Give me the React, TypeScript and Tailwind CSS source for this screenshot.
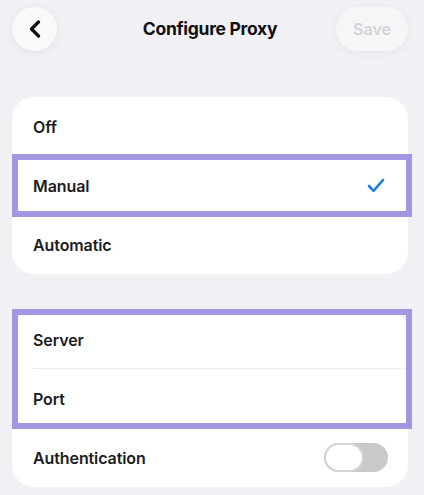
import { useState } from "react";

// Proxy settings screen: mode picker, server/port fields and an auth toggle
function Row({ label, children, divider }: { label: string; children?: React.ReactNode; divider?: boolean }) {
    return (
        <div className="relative flex h-[59px] items-center justify-between pl-[21px] pr-[20px]">
            <span className="text-[16px] font-semibold tracking-[-0.1px] text-[#1c1c1e]">{label}</span>
            {children}
            {divider && <div className="absolute bottom-0 left-[21px] right-0 h-px bg-[#ececf1]" />}
        </div>
    );
}

function Toggle({ on, onChange }: { on: boolean; onChange: (v: boolean) => void }) {
    return (
        <button
            onClick={() => onChange(!on)}
            className={`flex h-[29px] w-[64px] items-center rounded-full p-0 ${on ? "bg-[#34c759] justify-end" : "bg-[#c9c9cc] justify-start"}`}
        >
            <span className="h-[29px] w-[40px] rounded-full border-[2px] border-[#d4d4d6] bg-white" />
        </button>
    );
}

export default function App() {
    const [mode, setMode] = useState("Manual");
    const [auth, setAuth] = useState(false);

    return (
        <div className="min-h-[495px] bg-[#f0f0f5] pl-3 pr-4 pt-[7px] font-['Inter',sans-serif]">
            <div className="grid h-[44px] grid-cols-[1fr_auto_1fr] items-center">
                <button className="flex h-[44px] w-[45px] items-center justify-center rounded-full bg-[#f9f9fb] shadow-[0_2px_10px_rgba(0,0,0,0.06)]">
                    <svg width="14" height="18" viewBox="0 0 14 18" fill="none">
                        <path d="M10.5 2L3.5 9l7 7" stroke="#111" strokeWidth="3.2" strokeLinecap="round" strokeLinejoin="round" />
                    </svg>
                </button>
                <h1 className="text-[17.5px] font-bold tracking-[-0.3px] text-[#111]">Configure Proxy</h1>
                <button className="h-[44px] w-[72px] justify-self-end rounded-full bg-[#f6f6f9] text-[16px] font-semibold text-[#d2d2d7] shadow-[0_2px_10px_rgba(0,0,0,0.05)]">
                    Save
                </button>
            </div>

            <div className="mt-[46px] rounded-[22px] bg-white">
                <div onClick={() => setMode("Off")}>
                    <Row label="Off" />
                </div>
                <div className="relative" onClick={() => setMode("Manual")}>
                    <Row label="Manual">
                        {mode === "Manual" && (
                            <svg width="18" height="15" viewBox="0 0 18 15" fill="none" className="mr-[3px]">
                                <path d="M2 8l4.5 4.8L16 2" stroke="#1b7fe3" strokeWidth="2.6" strokeLinecap="round" strokeLinejoin="round" />
                            </svg>
                        )}
                    </Row>
                    <div className="pointer-events-none absolute -top-[2px] -bottom-[2px] left-0 -right-1 border-[6px] border-[#a596e4]" />
                </div>
                <div onClick={() => setMode("Automatic")}>
                    <Row label="Automatic" />
                </div>
            </div>

            <div className="mt-[36px] rounded-[22px] bg-white">
                <div className="relative">
                    <Row label="Server" divider />
                    <Row label="Port" />
                    <div className="pointer-events-none absolute -top-px -bottom-px left-0 -right-1 border-[6px] border-[#a596e4]" />
                </div>
                <Row label="Authentication">
                    <Toggle on={auth} onChange={setAuth} />
                </Row>
            </div>
        </div>
    );
}
